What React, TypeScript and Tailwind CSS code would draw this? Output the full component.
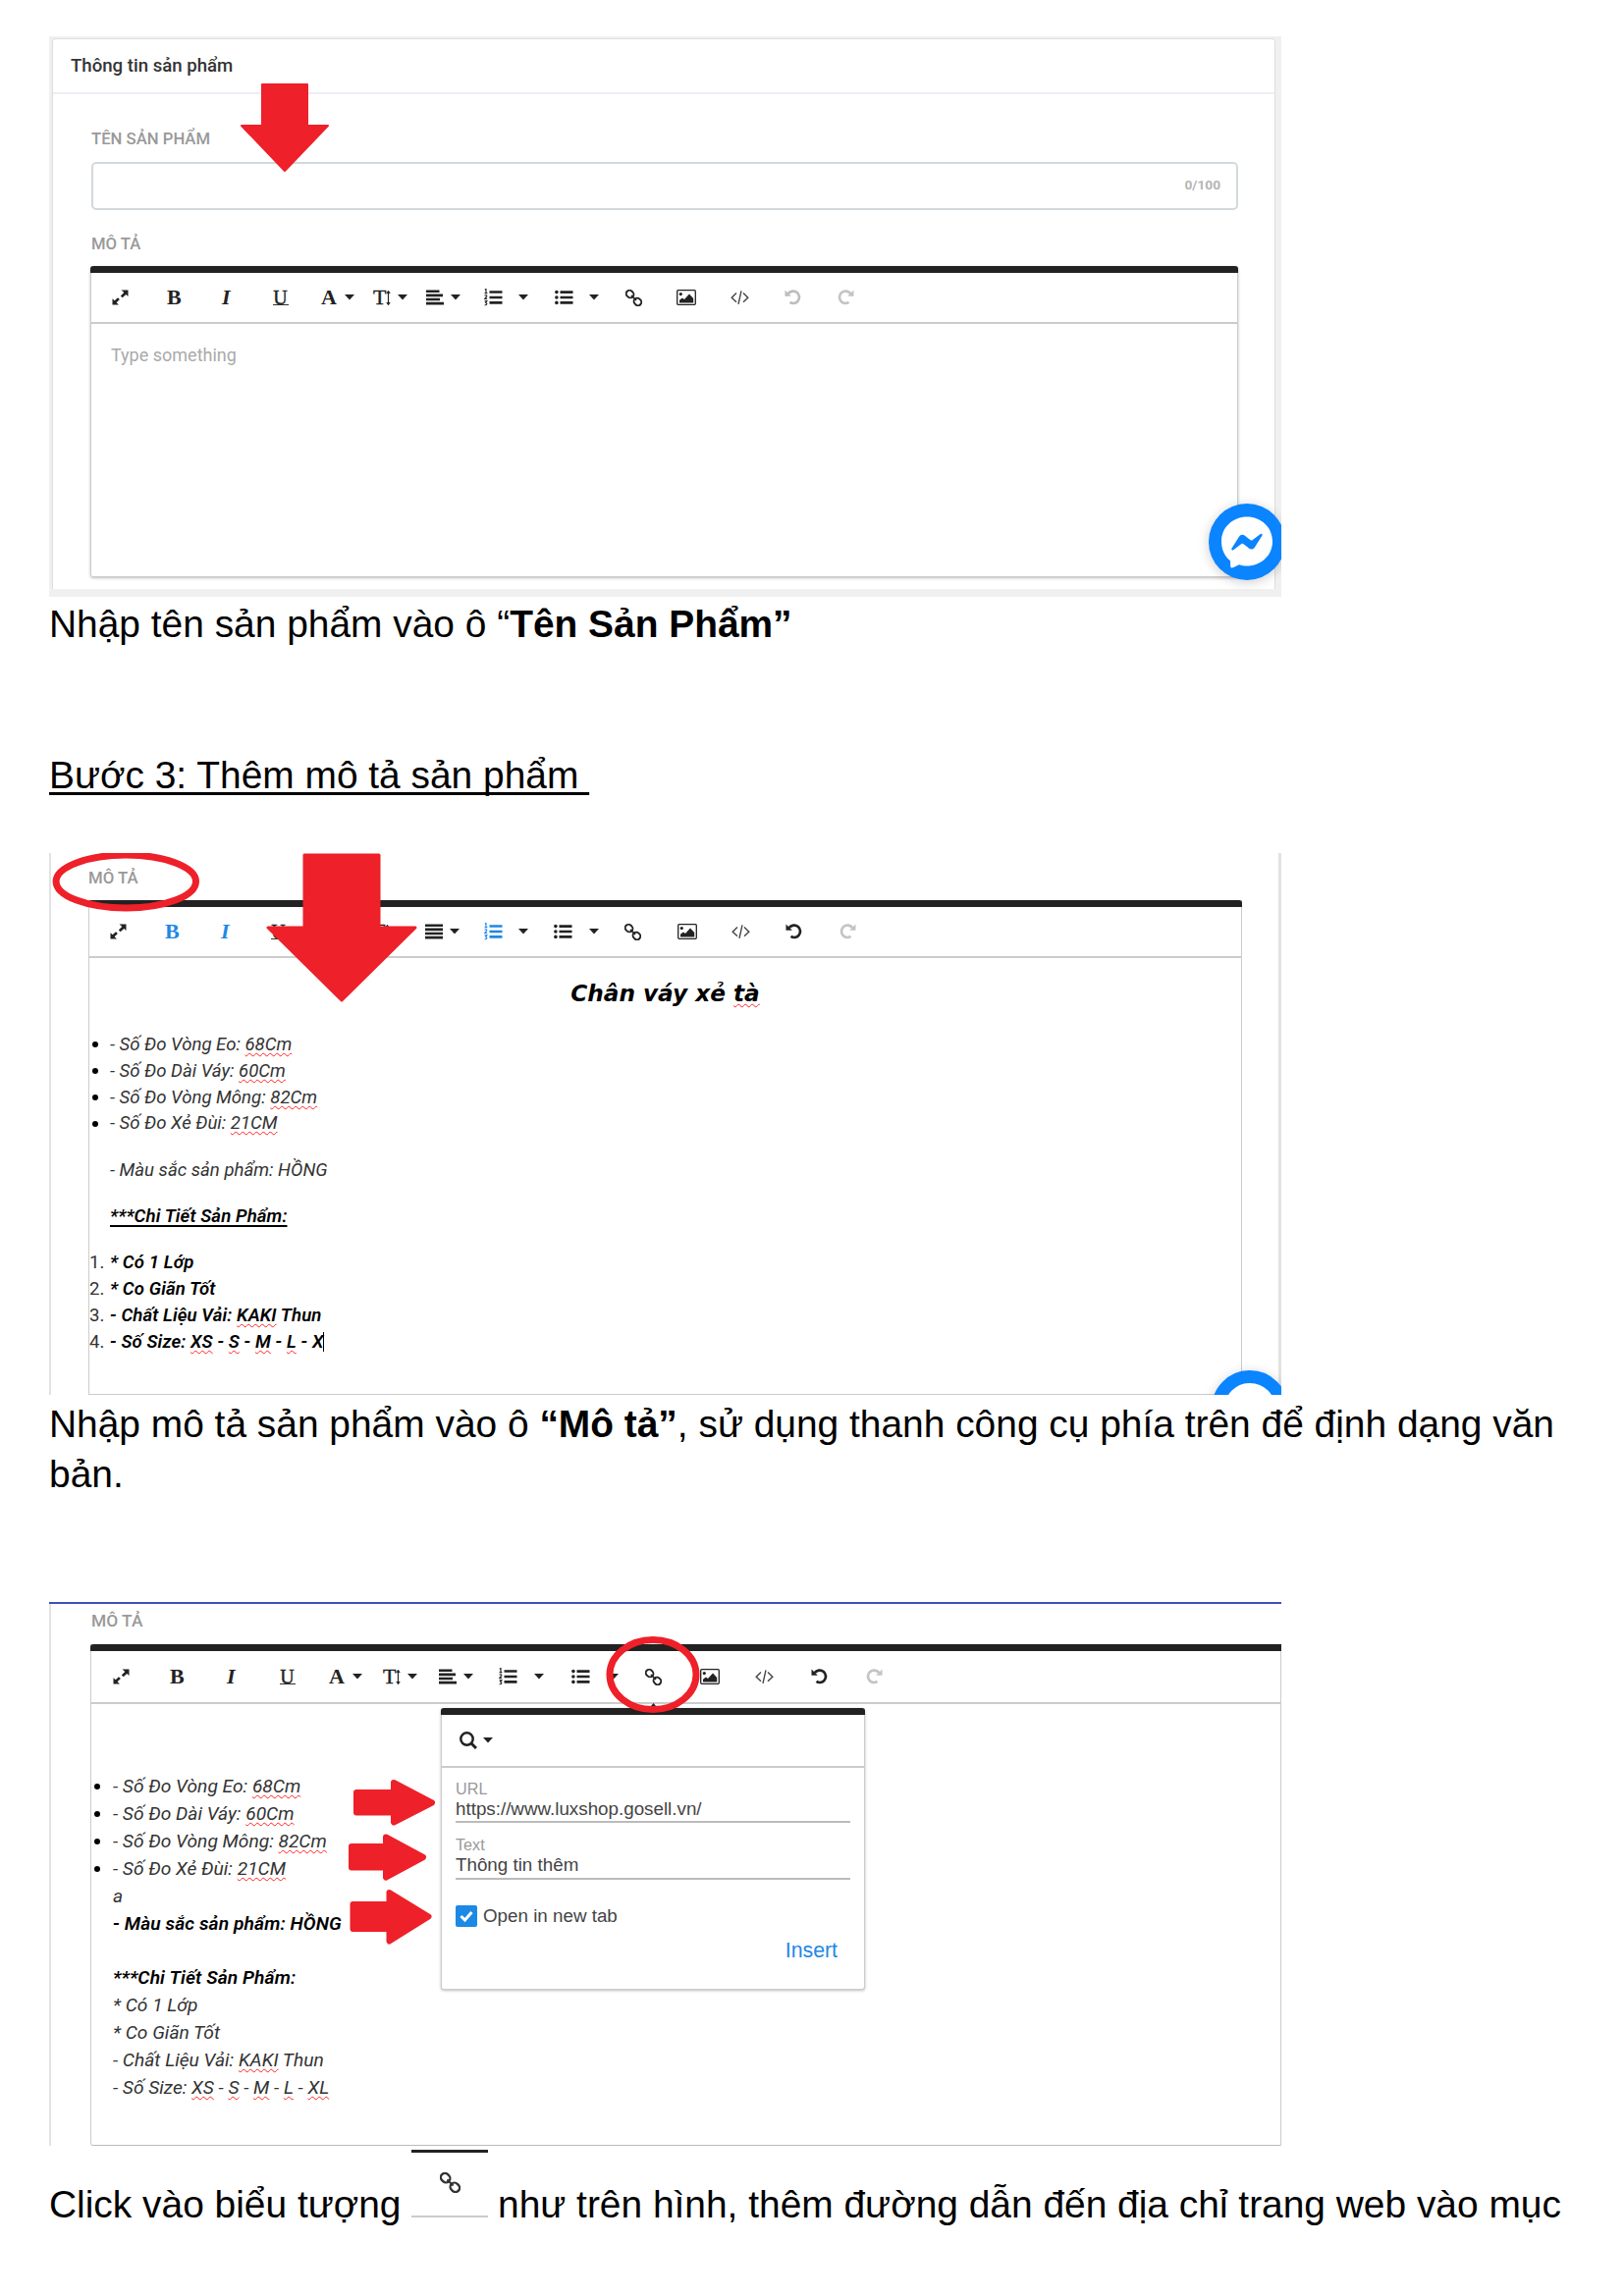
import React from "react";

type P = { children?: React.ReactNode };

const Caret = () => (
  <svg width="10" height="6" viewBox="0 0 10 6" className="block shrink-0">
    <path d="M0 0h10L5 5.6z" fill="currentColor" />
  </svg>
);

const Expand = () => (
  <svg width="17" height="16" viewBox="0 0 17 16" className="block">
    <path d="M9.5 0.5h7v6.6l-2.2-2.1-3.6 3.3-1.9-1.9 3.5-3.4zM0.5 9.2l2.2 2.1 3.3-3.1 1.9 1.8-3.3 3.3 2.4 2.2h-6.5z" fill="currentColor" />
  </svg>
);

const Align = ({ justify = false }: { justify?: boolean }) => (
  <svg width="18" height="16" viewBox="0 0 18 16" className="block shrink-0">
    <path
      d={justify ? "M0 1.8h18M0 5.9h18M0 10h18M0 14.1h18" : "M0 1.8h13.5M0 5.9h17M0 10h14M0 14.1h18"}
      stroke="currentColor"
      strokeWidth="2.6"
    />
  </svg>
);

const OrderedIcon = () => (
  <svg width="19" height="18" viewBox="0 0 19 18" className="block">
    <path d="M5.5 3.5h13M5.5 9h13M5.5 14.4h13" stroke="currentColor" strokeWidth="2.6" />
    <path
      d="M0.8 1.2L2 0.5v4M0.6 4.6h2.8M0.6 7.2c1-0.8 2.4-0.4 2.2 0.6L0.8 10.4h2.4M0.6 12.6h2.3L1.7 14.4c1.6 0 1.7 2.6-1.1 2.3"
      stroke="currentColor"
      strokeWidth="1.1"
      fill="none"
    />
  </svg>
);

const BulletIcon = () => (
  <svg width="19" height="16" viewBox="0 0 19 16" className="block">
    <path d="M5.5 2.6h13M5.5 8h13M5.5 13.4h13" stroke="currentColor" strokeWidth="2.7" />
    <g fill="currentColor">
      <circle cx="1.9" cy="2.6" r="1.8" />
      <circle cx="1.9" cy="8" r="1.8" />
      <circle cx="1.9" cy="13.4" r="1.8" />
    </g>
  </svg>
);

const LinkIcon = ({ size = 17 }: { size?: number }) => (
  <svg width={size} height={size} viewBox="0 0 17 17" className="block" fill="none" stroke="currentColor" strokeWidth="1.9">
    <rect x="0.6" y="1.2" width="8" height="6.8" rx="3.4" transform="rotate(45 4.6 4.6)" />
    <rect x="8.4" y="9" width="8" height="6.8" rx="3.4" transform="rotate(45 12.4 12.4)" />
    <path d="M6 6l5 5" strokeWidth="1.7" />
  </svg>
);

const ImageIcon = () => (
  <svg width="20" height="16" viewBox="0 0 20 16" className="block">
    <rect x="0.7" y="0.7" width="18.6" height="14.6" rx="1" fill="none" stroke="currentColor" strokeWidth="1.3" />
    <circle cx="4.3" cy="4.6" r="1.6" fill="currentColor" />
    <path d="M3 13.4v-2.6l3-2.4 2 1.5L13 4.600l4.200 4.400V13.400z" fill="currentColor" />
  </svg>
);

const CodeIcon = () => (
  <svg width="19" height="14" viewBox="0 0 19 14" className="block" fill="none" stroke="currentColor" strokeWidth="1.4">
    <path d="M6 2.6L1.2 7.2 6 11.8M13 2.6l4.8 4.6-4.8 4.6M11 0.4L8 13.8" />
  </svg>
);

const Undo = ({ flip = false }: { flip?: boolean }) => (
  <svg width="17" height="16" viewBox="0 0 17 16" className={flip ? "block -scale-x-100" : "block"}>
    <path d="M3.6 4.2C6 1.2 10.200 0.900 12.800 3c2.700 2.300 2.900 6.300 0.700 8.900-2 2.300-5.500 2.700-8 1" fill="none" stroke="currentColor" strokeWidth="2.7" />
    <path d="M0.500 0.500v6.300h6.300z" fill="currentColor" />
  </svg>
);

const Serif = ({ children, className = "" }: P & { className?: string }) => (
  <span className={"font-['Liberation_Serif',serif] text-[22px] leading-[22px] " + className}>{children}</span>
);

function Toolbar({ grid, active = false, canUndo = false }: { grid: string; active?: boolean; canUndo?: boolean }) {
  const on = active ? "text-[#1e88e5]" : "";
  return (
    <div className={"grid items-center text-[#222] " + grid}>
      <Expand />
      <Serif className={"font-bold " + on}>B</Serif>
      <Serif className={"font-bold italic " + on}>I</Serif>
      <div className="w-4 border-b border-[#333] text-center leading-none">
        <Serif className="block -ml-px h-[15px] !text-[20px] !leading-[17px] [-webkit-text-stroke:0.4px_#222]">U</Serif>
      </div>
      <div className="flex items-center gap-2">
        <Serif className="font-bold">A</Serif>
        <Caret />
      </div>
      <div className="flex items-center">
        <Serif className="[-webkit-text-stroke:0.4px_#222]">T</Serif>
        <svg width="5" height="15" viewBox="0 0 5 15" className="mr-[7px] block">
          <path d="M2.500 1v13M0.800 3L2.500 0.700 4.200 3M0.800 12L2.500 14.300 4.200 12" fill="none" stroke="currentColor" strokeWidth="1.200" />
        </svg>
        <Caret />
      </div>
      <div className="flex items-center gap-[7px]">
        <Align justify={active} />
        <Caret />
      </div>
      <div className={on}><OrderedIcon /></div>
      <Caret />
      <BulletIcon />
      <Caret />
      <LinkIcon />
      <ImageIcon />
      <div className="text-[#444]"><CodeIcon /></div>
      <div className={canUndo ? "" : "text-[#bdbdbd]"}><Undo /></div>
      <div className="text-[#c4c4c4]"><Undo flip /></div>
    </div>
  );
}

const Label = ({ children, className = "" }: P & { className?: string }) => (
  <div className={"font-[Roboto,sans-serif] font-medium whitespace-nowrap text-[#999] " + className}>{children}</div>
);

const Sp = ({ children }: P) => (
  <span className="underline decoration-[#f22] decoration-wavy decoration-[1.300px] underline-offset-[2px] [text-decoration-skip-ink:none]">
    {children}
  </span>
);

const Item = ({ children, mark, gutter = "w-[21px]", className = "" }: P & { mark?: string; gutter?: string; className?: string }) => (
  <div className="flex items-center whitespace-nowrap">
    <span className={"flex shrink-0 items-center not-italic " + gutter}>
      {mark === "dot" ? <i className="ml-[3px] block size-[6px] rounded-full bg-black" /> : mark}
    </span>
    <span className={className}>{children}</span>
  </div>
);

const measures = [
  ["- Số Đo Vòng Eo: ", "68Cm"],
  ["- Số Đo Dài Váy: ", "60Cm"],
  ["- Số Đo Vòng Mông: ", "82Cm"],
  ["- Số Đo Xẻ Đùi: ", "21CM"],
];

const Sizes = ({ last }: { last: React.ReactNode }) => (
  <>
    - Số Size: <Sp>XS</Sp> - <Sp>S</Sp> - <Sp>M</Sp> - <Sp>L</Sp> - {last}
  </>
);

const Para = ({ children, className = "" }: P & { className?: string }) => (
  <p className={"font-['Liberation_Sans',Arial,sans-serif] text-[38.9px] leading-[51px] whitespace-nowrap text-black " + className}>{children}</p>
);

function ProductInfo() {
  return (
    <section className="relative h-[571px] w-[1255px] overflow-hidden bg-[#f0f0f0] pt-[2px] pr-[6px] pl-[3px]">
      <div className="h-[561px] rounded-t-[4px] border border-b-0 border-[#dedede] bg-white">
        <div className="flex h-[56px] items-center border-b-2 border-[#eceff3] pt-[2px] pl-[18px] font-[Roboto,sans-serif] text-[18.600px] font-medium text-[#333]">
          Thông tin sản phẩm
        </div>
        <div className="pt-[34px] pl-[39px]">
          <Label className="h-[35px] text-[16.700px] leading-[24px]">TÊN SẢN PHẨM</Label>
          <div className="flex h-[49px] w-[1168px] items-center justify-end rounded-[5px] border-2 border-[#d3d8dc] pr-4 pb-[2px] font-[Roboto,sans-serif] text-[13.700px] font-bold text-[#b5b5b5]">
            0/100
          </div>
          <Label className="mt-[23px] h-[34px] text-[16.700px] leading-[24px]">MÔ TẢ</Label>
          <div className="-ml-px h-[317px] w-[1169px] rounded-[3px] border border-t-0 border-[#ccc] shadow-[0_1px_3px_#0004]">
            <div className="-mx-px h-[7px] rounded-t-[3px] bg-[#222]" />
            <Toolbar grid="h-[50px] pl-[21px] grid-cols-[56px_56px_52px_49px_53px_54px_59px_35px_37px_35px_37px_52px_55px_55px_54px_20px]" />
            <div className="h-[2px] bg-[#ccc]" />
            <div className="pt-[20px] pl-[20px] font-[Roboto,sans-serif] text-[18px] leading-[24px] text-[#aaa]">Type something</div>
          </div>
        </div>
      </div>
      <svg className="absolute top-[48px] left-[194px]" width="92" height="91" viewBox="0 0 92 91">
        <path d="M23 1h46v42h21L46 89 2 43h21z" fill="#ee2029" stroke="#ee2029" strokeWidth="2" strokeLinejoin="round" />
      </svg>
      <div className="absolute top-[476px] left-[1181px] size-[78px] rounded-full bg-[#0a84ff] shadow-[0_2px_12px_#0003]">
        <svg width="78" height="78" viewBox="0 0 78 78">
          <path d="M39 13.500c14.500 0 26 10.700 26 25s-11.500 25-26 25c-3 0-5.500-.4-8-1.200l-6.200 3c-1.300.5-2.600-.2-2.600-1.600l-.2-5.500C16.300 53.700 13 46.700 13 38.500c0-14.300 11.500-25 26-25z" fill="#fff" />
          <path d="M23.400 45.700l7.700-12.100c1.200-1.900 3.700-2.400 5.500-1l6.100 4.600c.6.400 1.300.4 1.800 0l8.200-6.200c1.100-.8 2.500.5 1.800 1.600l-7.700 12.100c-1.200 1.900-3.700 2.400-5.500 1l-6.100-4.600c-.6-.4-1.300-.4-1.800 0l-8.200 6.200c-1.100.8-2.500-.500-1.800-1.600z" fill="#0a84ff" />
        </svg>
      </div>
    </section>
  );
}

function DescriptionEditor() {
  const strong = "font-semibold tracking-[0.1px] text-black";
  return (
    <section className="relative mt-[54px] h-[552px] w-[1255px] overflow-hidden">
      <div className="h-[552px] border-r-[3px] border-l-2 border-[#e2e2e2] pt-[13px] pl-[38px]">
        <Label className="h-[35px] text-[16.800px] leading-[24px]">MÔ TẢ</Label>
        <div className="h-[504px] w-[1175px] border border-t-0 border-[#ccc]">
          <div className="-mx-px h-[7px] rounded-t-[3px] bg-[#222]" />
          <Toolbar active canUndo grid="h-[50px] pl-[21px] grid-cols-[56px_57px_51px_49px_54px_54px_60px_35px_36px_36px_36px_54px_55px_55px_55px_20px]" />
          <div className="h-[2px] bg-[#ccc]" />
          <div className="pt-[21px] text-center font-['DejaVu_Sans',sans-serif] text-[23.200px] leading-[30px] font-bold text-black italic">
            Chân váy xẻ <Sp>tà</Sp>
          </div>
          <div className="pt-[24px] font-[Roboto,sans-serif] text-[18.600px] leading-[26.800px] text-[#333] italic">
            {measures.map(([a, b]) => (
              <Item key={a} mark="dot">{a}<Sp>{b}</Sp></Item>
            ))}
            <div className="h-[20.500px]" />
            <Item>- Màu sắc sản phẩm: HỒNG</Item>
            <div className="h-[20.500px]" />
            <Item className={strong + " underline decoration-2 underline-offset-[3px] [text-decoration-skip-ink:none]"}>***Chi Tiết Sản Phẩm:</Item>
            <div className="h-[20.500px]" />
            <Item mark="1." className={strong}>* Có 1 Lớp</Item>
            <Item mark="2." className={strong}>* Co Giãn Tốt</Item>
            <Item mark="3." className={strong}>- Chất Liệu Vải: <Sp>KAKI</Sp> Thun</Item>
            <Item mark="4." className={strong + " border-r border-black leading-[20px]"}><Sizes last="X" /></Item>
          </div>
        </div>
      </div>
      <svg className="absolute top-0 left-[2px]" width="400" height="160" viewBox="0 0 400 160">
        <ellipse cx="76.300" cy="29" rx="71.200" ry="27" fill="none" stroke="#ee2029" strokeWidth="7" />
        <path d="M258 2h76v74h37L296 150 221 76h37z" fill="#ee2029" stroke="#ee2029" strokeWidth="3" strokeLinejoin="round" />
      </svg>
      <div className="absolute top-[527px] left-[1184px] size-[78px] rounded-full border-[13px] border-[#0a84ff] bg-white shadow-[0_2px_12px_#0003]" />
    </section>
  );
}

function LinkPopup() {
  return (
    <div className="absolute top-[106px] left-[399px] h-[287px] w-[432px] rounded-[3px] border border-t-0 border-[#ccc] bg-white font-['Liberation_Sans',Arial,sans-serif] text-[#444] shadow-[0_1px_3px_#0004]">
      <div className="-mx-px h-[7px] rounded-t-[3px] bg-[#222]" />
      <div className="flex h-[54px] items-center gap-[6px] border-b-2 border-[#ccc] pl-[18px] text-[#222]">
        <svg width="18" height="18" viewBox="0 0 18 18" fill="none" stroke="currentColor" strokeWidth="2.500">
          <circle cx="7.500" cy="7.500" r="6.200" />
          <path d="M12 12l5 5" strokeWidth="3" />
        </svg>
        <Caret />
      </div>
      <div className="pr-[14px] pl-[14px]">
        <div className="mt-[10px] text-[16.200px] leading-[22px] text-[#999]">URL</div>
        <div className="h-[24px] border-b-2 border-[#bbb] text-[18.800px] leading-[20px]">https://www.luxshop.gosell.vn/</div>
        <div className="mt-[11px] text-[16.200px] leading-[22px] text-[#999]">Text</div>
        <div className="h-[25px] border-b-2 border-[#bbb] text-[18.800px] leading-[20px]">Thông tin thêm</div>
        <div className="mt-[26px] flex h-[22px] items-center gap-[6px] text-[18.800px]">
          <span className="flex size-[22px] items-center justify-center rounded-[2px] bg-[#1e88e5]">
            <svg width="14" height="12" viewBox="0 0 14 12" fill="none" stroke="#fff" strokeWidth="3">
              <path d="M1.500 6l4 4L12.500 2" />
            </svg>
          </span>
          Open in new tab
        </div>
        <div className="mt-[11px] pr-[13px] text-right text-[21.300px] leading-[26px] text-[#1e88e5]">Insert</div>
      </div>
    </div>
  );
}

function LinkEditor() {
  const strong = "font-semibold tracking-[0.1px] text-black";
  return (
    <section className="relative mt-[106px] h-[554px] w-[1255px] overflow-hidden border-t-2 border-[#3f51b5]">
      <div className="h-[552px] border-l-2 border-[#e2e2e2] pt-[5px] pl-[41px]">
        <Label className="h-[36px] text-[17.400px] leading-[24px]">MÔ TẢ</Label>
        <div className="-ml-px h-[511px] w-[1213px] rounded-bl-[3px] border border-t-0 border-[#ccc] border-b-[#bbb]">
          <div className="-mx-px h-[7px] rounded-tl-[3px] bg-[#222]" />
          <Toolbar canUndo grid="h-[52px] pl-[22px] grid-cols-[58px_58px_54px_50px_55px_57px_61px_36px_38px_38px_37px_56px_56px_57px_56px_20px]" />
          <div className="h-[2px] bg-[#ccc]" />
          <div className="pt-[70px] font-[Roboto,sans-serif] text-[19.200px] leading-[27.900px] text-[#333] italic">
            {measures.map(([a, b]) => (
              <Item key={a} mark="dot" gutter="w-[22px]">{a}<Sp>{b}</Sp></Item>
            ))}
            <Item gutter="w-[22px]">a</Item>
            <Item gutter="w-[22px]" className={strong}>- Màu sắc sản phẩm: HỒNG</Item>
            <div className="h-[27.900px]" />
            <Item gutter="w-[22px]" className={strong}>***Chi Tiết Sản Phẩm:</Item>
            <Item gutter="w-[22px]">* Có 1 Lớp</Item>
            <Item gutter="w-[22px]">* Co Giãn Tốt</Item>
            <Item gutter="w-[22px]">- Chất Liệu Vải: <Sp>KAKI</Sp> Thun</Item>
            <Item gutter="w-[22px]"><Sizes last={<Sp>XL</Sp>} /></Item>
          </div>
        </div>
      </div>
      <LinkPopup />
      <svg className="absolute top-0 left-0" width="700" height="360" viewBox="50 1634 700 360">
        <path d="M665.500 1735l5 6h-10z" fill="#222" />
        <ellipse cx="665" cy="1706" rx="44" ry="35.500" fill="none" stroke="#ee2029" strokeWidth="7" />
        <g fill="#ee2029" stroke="#ee2029" strokeWidth="6" strokeLinejoin="round">
          <path d="M363 1826h38v-10l39 20.500-39 20v-10h-38z" />
          <path d="M358 1881h35v-9.500l38 20.500-38 20.500v-10h-35z" />
          <path d="M359.500 1940h37v-12l40 24.500-40 25v-12.500h-37z" />
        </g>
      </svg>
    </section>
  );
}

export default function App() {
  return (
    <main className="h-[2339px] w-[1654px] overflow-hidden bg-white pt-[37px] pl-[50px]">
      <ProductInfo />
      <Para className="mt-[2px]">
        Nhập tên sản phẩm vào ô “<b>Tên Sản Phẩm”</b>
      </Para>
      <Para className="mt-[103px] whitespace-pre underline decoration-[2.500px] underline-offset-[4px] [text-decoration-skip-ink:none]">
        {"Bước 3: Thêm mô tả sản phẩm "}
      </Para>
      <DescriptionEditor />
      <Para className="mt-[4px]">
        Nhập mô tả sản phẩm vào ô <b>“Mô tả”</b>, sử dụng thanh công cụ phía trên để định dạng văn
        <br />
        bản.
      </Para>
      <div className="-mt-px">
        <LinkEditor />
      </div>
      <div className="flex items-start">
        <Para className="mt-[34px] w-[369px]">Click vào biểu tượng</Para>
        <div className="mt-[4px] flex h-[69px] w-[78px] items-start border-t-[3px] border-b-2 border-t-[#222] border-b-[#ccc] pt-[20px] pl-[29px] text-[#333]">
          <LinkIcon size={21} />
        </div>
        <Para className="mt-[34px] ml-[10px]">như trên hình, thêm đường dẫn đến địa chỉ trang web vào mục</Para>
      </div>
    </main>
  );
}
